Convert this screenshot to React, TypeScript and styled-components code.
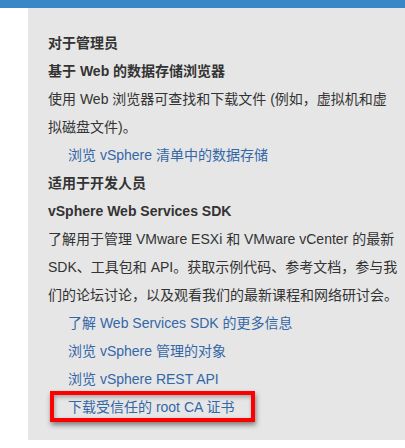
import * as React from 'react'
import styled, { createGlobalStyle } from 'styled-components'

const GlobalStyle = createGlobalStyle`
  html, body {
    margin: 0;
    padding: 0;
    background: #ffffff;
  }
  body {
    font-family: "Liberation Sans", Arial, "Noto Sans CJK SC", sans-serif;
    font-size: 14px;
    color: #333333;
  }
`

const TopBar = styled.div`
  height: 8px;
  background-color: #3a87c8;
`

const Body = styled.div`
  display: flex;
  padding-left: 28px;
`

const Panel = styled.div`
  flex: 1;
  background-color: #e6e6e6;
  padding: 21px 10px 19px 20px;
`

const Content = styled.div`
  width: 350px;
`

const Heading = styled.div`
  font-weight: bold;
  line-height: 28px;
  color: #333333;
`

const Text = styled.p`
  margin: 0;
  line-height: 28px;
  color: #333333;
`

const LinkRow = styled.div<{ $highlight?: boolean }>`
  line-height: 28px;
  padding-left: 20px;
  position: relative;
  ${p => p.$highlight && `
    &::after {
      content: '';
      position: absolute;
      left: 2px;
      top: -2px;
      width: 197px;
      height: 23px;
      border: 4px solid #ff0000;
      box-shadow: 1px 3px 5px rgba(0, 0, 0, 0.45), inset 1px 2px 4px rgba(0, 0, 0, 0.3);
    }
  `}
`

const Link = styled.a`
  color: #3467a6;
  text-decoration: none;
`

const links = [
  '了解 Web Services SDK 的更多信息',
  '浏览 vSphere 管理的对象',
  '浏览 vSphere REST API'
]

export default function App () {
  return (
    <>
      <GlobalStyle />
      <TopBar />
      <Body>
        <Panel>
          <Content>
            <Heading>对于管理员</Heading>
            <Heading>基于 Web 的数据存储浏览器</Heading>
            <Text>使用 Web 浏览器可查找和下载文件 (例如，虚拟机和虚拟磁盘文件)。</Text>
            <LinkRow><Link href='#'>浏览 vSphere 清单中的数据存储</Link></LinkRow>
            <Heading>适用于开发人员</Heading>
            <Heading>vSphere Web Services SDK</Heading>
            <Text>了解用于管理 VMware ESXi 和 VMware vCenter 的最新 SDK、工具包和 API。获取示例代码、参考文档，参与我们的论坛讨论，以及观看我们的最新课程和网络研讨会。</Text>
            {links.map(l => (
              <LinkRow key={l}><Link href='#'>{l}</Link></LinkRow>
            ))}
            <LinkRow $highlight><Link href='#'>下载受信任的 root CA 证书</Link></LinkRow>
          </Content>
        </Panel>
      </Body>
    </>
  )
}
